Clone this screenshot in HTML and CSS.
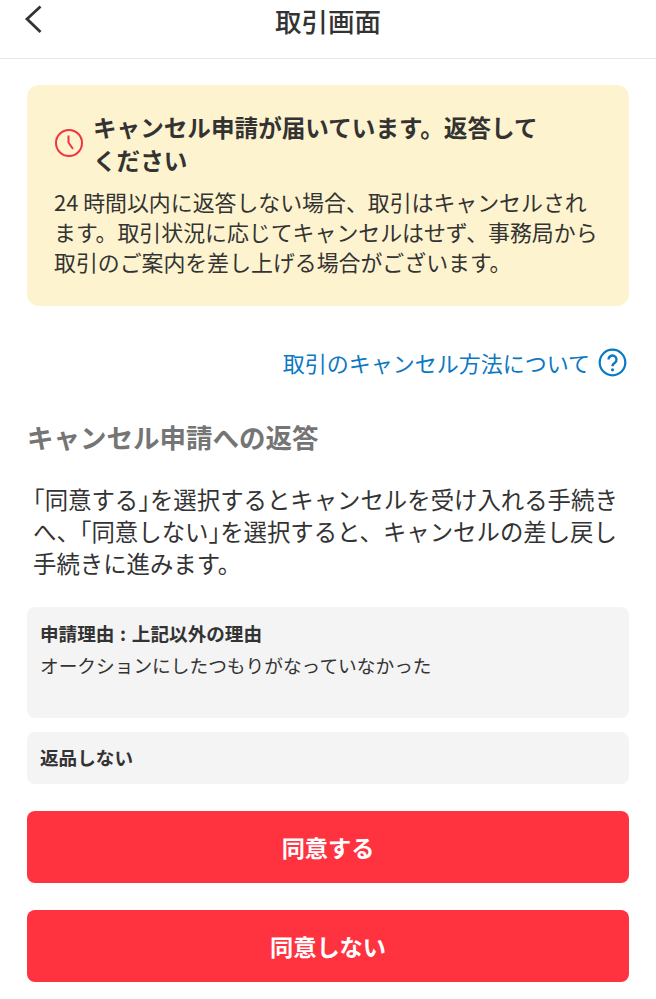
FILE: index.html
```html
<!DOCTYPE html>
<html lang="ja">
<head>
<meta charset="utf-8">
<title>取引画面</title>
<link rel="stylesheet" href="styles.css">
</head>
<body>
<header class="nav">
  <svg class="back" width="20" height="30" viewBox="0 0 20 30"><path d="M16.500 2.500 L3 15 L16.500 28" fill="none" stroke="#333" stroke-width="2.800"/></svg>
  <h1 class="nav-title">取引画面</h1>
</header>
<main class="content">
  <section class="notice">
    <div class="notice-head">
      <svg class="clock" width="30" height="30" viewBox="0 0 30 30"><circle cx="15" cy="15" r="13" fill="none" stroke="#f0353f" stroke-width="2"/><path d="M14.500 7.500 V14.500 L19 21" fill="none" stroke="#f0353f" stroke-width="2"/></svg>
      <h2 class="notice-title">キャンセル申請が届いています。返答してください</h2>
    </div>
    <p class="notice-body">24 時間以内に返答しない場合、取引はキャンセルされます。取引状況に応じてキャンセルはせず、事務局から取引のご案内を差し上げる場合がございます。</p>
  </section>
  <a class="help" href="#">取引のキャンセル方法について
    <svg class="help-icon" width="29" height="29" viewBox="0 0 29 29"><circle cx="14.500" cy="14.500" r="12.800" fill="none" stroke="#0b78c2" stroke-width="2.200"/><path d="M10.500 11.500 a4 4 0 1 1 6.300 3.300 c-1.500 1-2.300 1.700-2.300 3.500" fill="none" stroke="#0b78c2" stroke-width="2.400"/><circle cx="14.500" cy="21.800" r="1.600" fill="#0b78c2"/></svg>
  </a>
  <h2 class="section-title">キャンセル申請への返答</h2>
  <p class="intro"><span class="tight">「</span>同意する<span class="tight">」</span>を選択するとキャンセルを受け入れる手続き<br>へ、<span class="tight">「</span>同意しない<span class="tight">」</span>を選択すると、キャンセルの差し戻し<br>手続きに進みます。</p>
  <div class="info info-reason">
    <div class="info-label">申請理由 : 上記以外の理由</div>
    <div class="info-text">オークションにしたつもりがなっていなかった</div>
  </div>
  <div class="info info-return"><div class="info-label">返品しない</div></div>
  <button class="btn btn-first">同意する</button>
  <button class="btn btn-second">同意しない</button>
</main>
</body>
</html>
```
FILE: styles.css
```css
* { box-sizing: border-box; }
html, body { margin: 0; padding: 0; background: #fff; }
body {
  width: 656px;
  height: 999px;
  overflow: hidden;
  font-family: "Noto Sans CJK JP", "Noto Sans", sans-serif;
  color: #333;
}
.nav {
  height: 59px;
  border-bottom: 1px solid #e6e6e6;
  display: flex;
  justify-content: center;
  position: relative;
}
.back { position: absolute; left: 24px; top: 4px; }
.nav-title {
  margin: 0;
  font-size: 26.500px;
  font-weight: 500;
  line-height: 42px;
}
.content { padding: 26px 27px 0; }
.notice {
  background: #fef3cf;
  border-radius: 12px;
  height: 221px;
  padding: 26px 26px 0 27px;
}
.notice-head { display: flex; align-items: center; gap: 10px; }
.clock { flex: none; margin-top: -1px; margin-bottom: 1px; }
.notice-title {
  margin: 0 0 0 -1px;
  width: 456px;
  font-size: 23.600px;
  line-height: 32.500px;
  font-weight: 700;
}
.notice-body {
  margin: 11px 0 0;
  font-size: 21.900px;
  line-height: 30px;
  font-weight: 400;
}
.help {
  margin: 41px 2px 0 0;
  display: flex;
  justify-content: flex-end;
  align-items: center;
  gap: 8px;
  color: #0b78c2;
  text-decoration: none;
  font-size: 22px;
  line-height: 30px;
}
.help-icon { flex: none; }
.section-title {
  margin: 40px 0 0;
  font-size: 26.500px;
  line-height: 40px;
  font-weight: 700;
  color: #757575;
}
.intro {
  margin: 26px 0 0 6px;
  font-size: 23.400px;
  line-height: 32px;
  white-space: nowrap;
}
.tight { font-feature-settings: "halt"; }
.info {
  background: #f4f4f4;
  border-radius: 8px;
  padding: 0 14px;
}
.info-reason { margin-top: 28px; height: 111px; padding-top: 12px; }
.info-return { margin-top: 14px; height: 52px; padding-top: 11px; }
.info-label { font-size: 18.600px; line-height: 28px; font-weight: 700; word-spacing: 1.500px; margin-left: -1px; }
.info-text { font-size: 18.700px; line-height: 28px; margin-top: 4px; margin-left: -1px; }
.btn {
  display: block;
  width: 602px;
  height: 72px;
  border: 0;
  border-radius: 8px;
  background: #ff3240;
  color: #fff;
  font-family: inherit;
  font-size: 23.200px;
  font-weight: 700;
  padding: 0;
}
.btn-first { margin-top: 27px; }
.btn-second { margin-top: 27px; }
```
